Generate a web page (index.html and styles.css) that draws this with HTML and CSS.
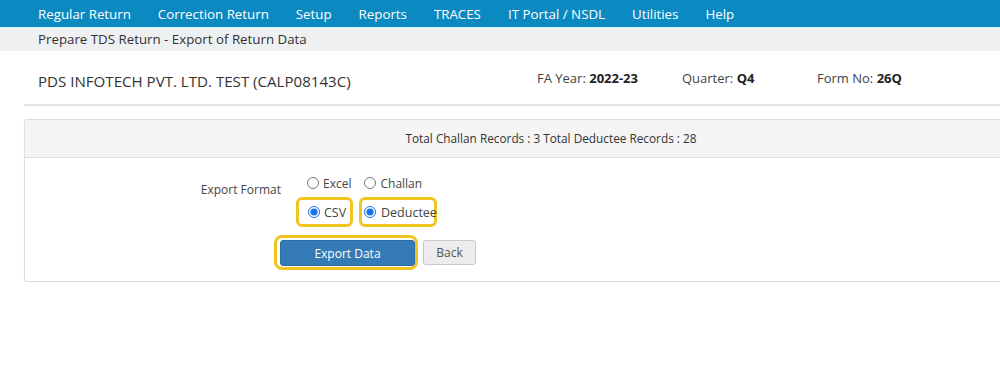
FILE: index.html
```html
<!DOCTYPE html>
<html lang="en">

<head>
    <meta charset="UTF-8">
    <meta name="viewport" content="width=device-width, initial-scale=1.0">
    <title>Export of Return Data</title>
    <link rel="stylesheet" href="styles.css">
</head>

<body>
    <!-- Top menu -->
    <nav class="menu">
        <a href="#">Regular Return</a>
        <a href="#">Correction Return</a>
        <a href="#">Setup</a>
        <a href="#">Reports</a>
        <a href="#">TRACES</a>
        <a href="#">IT Portal / NSDL</a>
        <a href="#">Utilities</a>
        <a href="#">Help</a>
    </nav>

    <div class="breadcrumb">Prepare TDS Return - Export of Return Data</div>

    <div class="page">
        <div class="deductor">
            <div class="deductor-name">PDS INFOTECH PVT. LTD. TEST (CALP08143C)</div>
            <div class="deductor-info">
                <span class="info fa-year">FA Year: <b>2022-23</b></span>
                <span class="info quarter">Quarter: <b>Q4</b></span>
                <span class="info">Form No: <b>26Q</b></span>
            </div>
        </div>

        <div class="panel">
            <div class="panel-heading">Total Challan Records : 3 Total Deductee Records : 28</div>
            <div class="panel-body">
                <div class="form-label">Export Format</div>
                <div class="form-controls">
                    <div class="radio-row">
                        <label class="radio excel"><input type="radio" name="fmt"> Excel</label>
                        <label class="radio"><input type="radio" name="type"> Challan</label>
                    </div>
                    <div class="radio-row marked">
                        <label class="radio mark mark-csv"><input type="radio" name="fmt" checked> CSV</label>
                        <label class="radio mark mark-deductee"><input type="radio" name="type" checked> Deductee</label>
                    </div>
                    <div class="button-row">
                        <div class="mark mark-button">
                            <button class="btn btn-primary">Export Data</button>
                        </div>
                        <button class="btn btn-default">Back</button>
                    </div>
                </div>
            </div>
        </div>
    </div>
</body>

</html>
```

FILE: styles.css
```css
body {
    font-family: 'Open Sans', 'Noto Sans', sans-serif;
    color: #333;
    margin: 0;
    background-color: #fff;
    overflow: hidden;
}

.menu {
    display: flex;
    height: 27px;
    align-items: center;
    padding-left: 24.5px;
    background-color: #0b89c1;
}

.menu a {
    color: #fff;
    text-decoration: none;
    font-size: 13.3px;
    padding: 0 13.5px;
    line-height: 26px;
}

.breadcrumb {
    height: 23px;
    line-height: 23px;
    padding-left: 38px;
    font-size: 13.3px;
    color: #333;
    background-color: #eef0f2;
    border-top: 1px solid #d6eef8;
}

.page {
    padding-left: 24px;
}

.deductor {
    display: flex;
    align-items: center;
    height: 53px;
    padding-left: 14px;
    border-bottom: 2px solid #e4e4e4;
}

.deductor-name {
    flex-shrink: 0;
    font-size: 15.1px;
    padding-top: 7px;
    width: 499px;
}

.deductor-info {
    display: flex;
    flex-shrink: 0;
    font-size: 13px;
    color: #444;
}

.deductor-info b {
    color: #222;
}

.fa-year {
    width: 145px;
}

.quarter {
    width: 135px;
}

/* Panel, cut off at the right edge of the window */
.panel {
    margin-top: 13px;
    border: 1px solid #dedede;
    border-right: none;
    border-radius: 3px 0 0 3px;
    box-shadow: 0 1px 2px rgba(0, 0, 0, 0.05);
}

.panel-heading {
    height: 37px;
    line-height: 37px;
    text-align: center;
    font-size: 11.8px;
    padding-left: 77px;
    background-color: #f5f5f5;
    border-bottom: 1px solid #dedede;
}

.panel-body {
    display: flex;
    padding: 14px 0 11px 0;
}

.form-label {
    width: 256px;
    text-align: right;
    font-size: 12px;
    padding-top: 9px;
    color: #444;
}

.form-controls {
    margin-left: -5px;
}

.radio-row {
    display: flex;
    padding-left: 31px;
    height: 20px;
    margin-top: 1px;
    align-items: center;
}

.radio {
    display: inline-flex;
    align-items: center;
    font-size: 12px;
    color: #444;
}

.radio.excel {
    margin-right: 13px;
}

.radio input {
    width: 12px;
    height: 12px;
    margin: 0 4px 0 0;
    accent-color: #1a73e8;
}

.radio-row.marked {
    padding-left: 20px;
    height: 30px;
    margin-top: 4px;
}

.mark {
    border: 3px solid #f2c41f;
    border-radius: 6px;
    box-sizing: border-box;
}

.mark-csv {
    width: 57px;
    height: 30px;
    padding-left: 9px;
    margin-right: 6px;
    font-size: 12.5px;
}

.mark-deductee {
    width: 78px;
    height: 30px;
    padding-left: 2px;
    font-size: 12.5px;
}

.mark-deductee input {
    margin-right: 5px;
}

.button-row {
    display: flex;
    align-items: center;
    margin-top: 8px;
    margin-left: -2px;
}

.mark-button {
    padding: 2px 0 1px 3px;
    border-radius: 8px;
}

.btn {
    font-family: 'Open Sans', 'Noto Sans', sans-serif;
    font-size: 12px;
    border-radius: 3px;
    cursor: pointer;
}

.btn-primary {
    display: block;
    width: 135px;
    height: 26px;
    color: #fff;
    background-color: #337ab7;
    border: 1px solid #2e6da4;
}

.btn-default {
    width: 53px;
    height: 25px;
    margin-left: 5px;
    color: #555;
    background-color: #ececec;
    border: 1px solid #c8c8c8;
}
```
